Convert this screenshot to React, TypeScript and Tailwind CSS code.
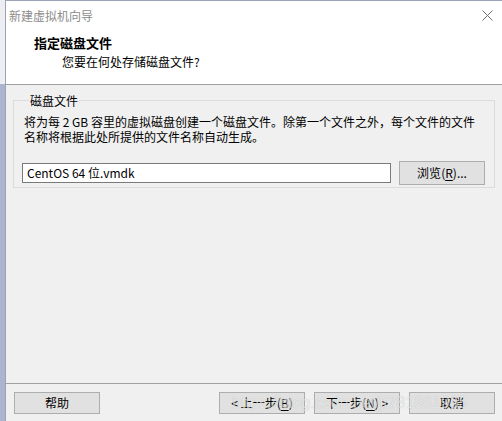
import React from 'react';

const FONT = '"Noto Sans CJK SC", "Noto Sans", sans-serif';

// underlined access key inside a label, e.g. 浏览(R)...
function Key({ k }: { k: string }) {
  return (
    <>
      (<span className="underline underline-offset-2">{k}</span>)
    </>
  );
}

function Btn({ children, className = '' }: { children: React.ReactNode; className?: string }) {
  return (
    <button
      className={`h-[22px] w-[86px] border border-[#adadad] bg-[#e1e1e1] text-[12px] leading-[20px] text-black ${className}`}
    >
      {children}
    </button>
  );
}

function CloseIcon() {
  return (
    <svg width="11" height="11" viewBox="0 0 11 11" className="text-[#707070]">
      <path d="M0.5 0.5 L10.5 10.5 M10.5 0.5 L0.5 10.5" stroke="currentColor" strokeWidth="1" />
    </svg>
  );
}

export default function App() {
  return (
    <div className="flex h-[421px] w-[502px] overflow-hidden bg-[#f0f0f0] text-black" style={{ fontFamily: FONT }}>
      {/* outside strip of the window */}
      <div className="flex w-[5px] flex-col">
        <div className="h-[84px] bg-[#eceef2]" />
        <div className="flex-1 bg-[#abb5d0]" />
      </div>

      <div className="flex flex-1 flex-col border-l border-t border-[#9aa3b8]">
        {/* title + header */}
        <div className="h-[84px] border-b border-[#a0a0a0] bg-white">
          <div className="flex h-[29px] items-center justify-between pl-[3px] pr-[9px]">
            <span className="text-[12px] leading-[15px] text-[#8c8c8c]">新建虚拟机向导</span>
            <CloseIcon />
          </div>
          <div className="mt-[5px] pl-[28px] text-[13px] font-bold leading-[16px]">指定磁盘文件</div>
          <div className="mt-[3px] pl-[56px] text-[12px] leading-[16px]">您要在何处存储磁盘文件?</div>
        </div>

        {/* body */}
        <div className="flex-1 pl-[7px] pt-[8px]">
          <fieldset className="w-[482px] border border-[#dcdcdc] px-[8px] pb-[2px]">
            <legend className="ml-[7px] px-[1px] text-[12px] leading-[15px]">磁盘文件</legend>
            <p className="mt-[6px] pl-[2px] text-[12px] leading-[15px]">
              将为每 2 GB 容里的虚拟磁盘创建一个磁盘文件。除第一个文件之外，每个文件的文件名称将根据此处所提供的文件名称自动生成。
            </p>
            <div className="mt-[17px] flex items-center gap-[8px]">
              <div className="flex h-[20px] w-[369px] items-center border border-[#7a7a7a] bg-white pl-[4px] text-[12px]">
                CentOS 64 位.vmdk
              </div>
              <button className="h-[24px] w-[86px] border border-[#adadad] bg-[#e1e1e1] text-[12px]">
                浏览<Key k="R" />...
              </button>
            </div>
          </fieldset>
        </div>

        {/* buttons */}
        <div className="relative h-[38px] border-t border-[#a0a0a0] pt-[8px]">
          <div className="flex pl-[8px]">
            <Btn>帮助</Btn>
            <Btn className="ml-[119px]">
              &lt; 上一步<Key k="B" />
            </Btn>
            <Btn className="ml-[9px]">
              下一步<Key k="N" /> &gt;
            </Btn>
            <Btn className="ml-[9px] w-[82px]">取消</Btn>
          </div>
          <span
            className="pointer-events-none absolute left-[226px] top-[9px] whitespace-nowrap text-[16px] leading-[20px] text-white/60 [text-shadow:0_0_1px_rgba(0,0,0,0.2)]"
            style={{ fontFamily: '"Liberation Sans", sans-serif' }}
          >
            https://blog.csdn.net/jt781861965
          </span>
        </div>
      </div>
    </div>
  );
}
